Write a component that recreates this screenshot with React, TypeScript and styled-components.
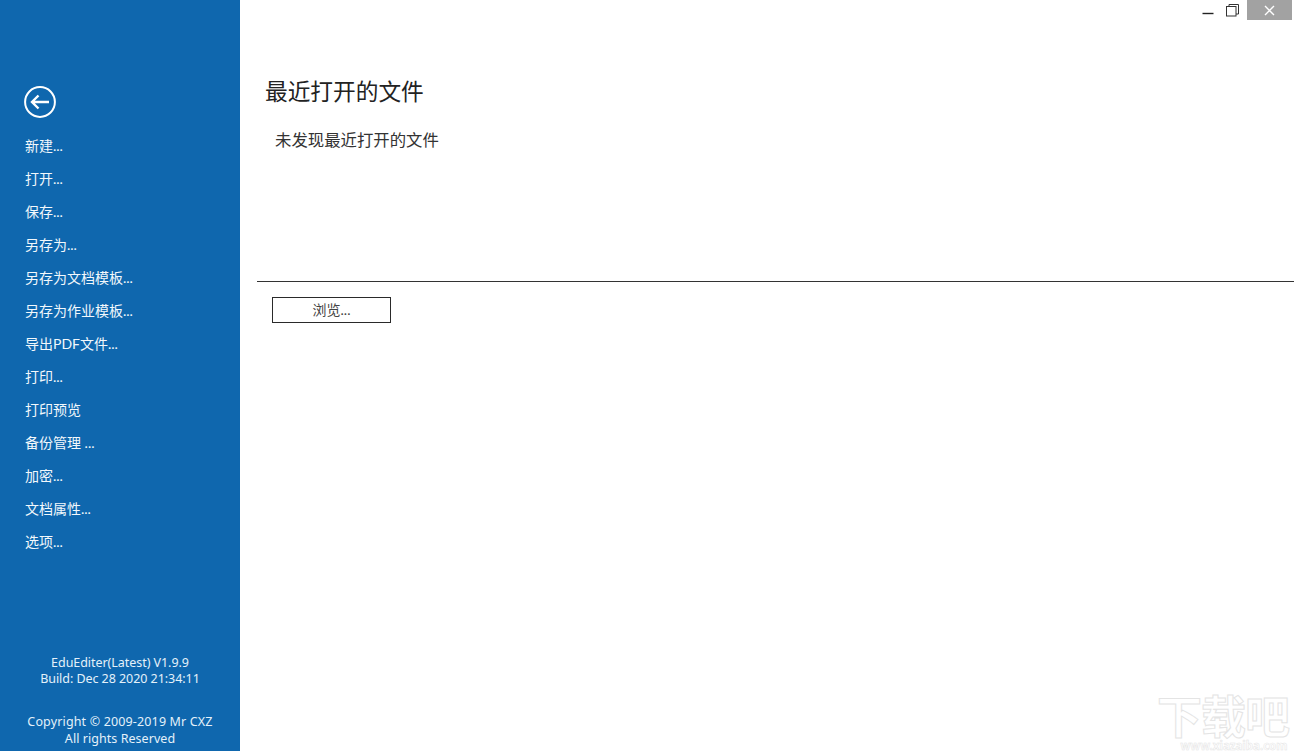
import React from "react";
import styled, { createGlobalStyle } from "styled-components";

const Global = createGlobalStyle`
  html, body { margin: 0; padding: 0; height: 100%; background: #fff; overflow: hidden; }
  #root { height: 100%; }
  * { box-sizing: border-box; }
`;

const FONT = `"Noto Sans", "Noto Sans CJK SC", sans-serif`;
const CJK = `Lato, "Noto Sans CJK SC", "Noto Sans", sans-serif`;

const Page = styled.div`
  position: relative;
  display: flex;
  width: 1294px;
  height: 751px;
  font-family: ${FONT};
  overflow: hidden;
  background: #fff;
`;

const Sidebar = styled.aside`
  width: 240px;
  flex: none;
  display: flex;
  flex-direction: column;
  background: #0f67ae;
  color: #eef6fc;
  padding-top: 86px;
`;

const BackButton = styled.button`
  width: 32px;
  height: 32px;
  margin-left: 24px;
  padding: 0;
  border: 0;
  background: none;
  display: block;
`;

const Menu = styled.nav`
  margin-top: 11px;
  display: flex;
  flex-direction: column;
`;

const MenuItem = styled.div`
  height: 33px;
  padding-left: 25px;
  font-family: ${CJK};
  font-size: 14px;
  line-height: 33px;
  color: #f2f8fc;
`;

const Footer = styled.footer`
  margin-top: auto;
  padding-bottom: 4px;
  text-align: center;
  font-size: 12.5px;
  line-height: 16.3px;
  color: #e4f1fa;
`;

const FooterBlock = styled.div`
  & + & { margin-top: 27px; }
`;

const FooterLine = styled.div<{ $spacing?: number }>`
  letter-spacing: ${(p) => p.$spacing ?? 0}px;
`;

const Main = styled.main`
  flex: 1;
  display: flex;
  flex-direction: column;
  padding-left: 17px;
  padding-top: 75px;
`;

const Title = styled.h1`
  margin: 0 0 0 8px;
  font-family: ${CJK};
  font-size: 22.7px;
  font-weight: 400;
  line-height: 34px;
  color: #222;
`;

const Empty = styled.p`
  margin: 20px 0 0 18px;
  height: 152px;
  font-family: ${CJK};
  font-size: 16.4px;
  line-height: 22px;
  color: #333;
`;

const Divider = styled.hr`
  margin: 0;
  border: 0;
  border-top: 1px solid #333;
  height: 1px;
`;

const Browse = styled.button`
  margin: 15px 0 0 15px;
  width: 119px;
  height: 26px;
  border: 1px solid #2a2a2a;
  background: #fff;
  font-family: ${CJK};
  font-size: 14px;
  line-height: 24px;
  padding: 0;
  color: #444;
  display: block;
`;

const WindowControls = styled.div`
  position: absolute;
  top: 0;
  right: 2px;
  display: flex;
  align-items: flex-start;
`;

const WinButton = styled.div<{ $w: number; $active?: boolean; $shift?: number }>`
  width: ${(p) => p.$w}px;
  height: 20px;
  padding-right: ${(p) => p.$shift ?? 0}px;
  display: flex;
  align-items: center;
  justify-content: center;
  background: ${(p) => (p.$active ? "#a2a2a2" : "transparent")};
`;

const Watermark = styled.div`
  position: absolute;
  right: 4px;
  top: 693px;
  width: 134px;
  text-align: center;
  color: transparent;
  -webkit-text-stroke: 1px #e4e4e4;
  pointer-events: none;
`;

const WatermarkTitle = styled.div`
  font-family: ${CJK};
  font-size: 45px;
  line-height: 48px;
  font-weight: 700;
  white-space: nowrap;
  letter-spacing: -1px;
`;

const WatermarkUrl = styled.div`
  margin-left: 22px;
  font-family: ${FONT};
  font-size: 11.5px;
  line-height: 10px;
  font-weight: 700;
  -webkit-text-stroke: 0.5px #e4e4e4;
  white-space: nowrap;
`;

const items = [
  "新建...", "打开...", "保存...", "另存为...", "另存为文档模板...", "另存为作业模板...",
  "导出PDF文件...", "打印...", "打印预览", "备份管理 ...", "加密...", "文档属性...", "选项...",
];

export default function App() {
  return (
    <Page>
      <Global />
      <Sidebar>
        <BackButton aria-label="返回">
          <svg width="32" height="32" viewBox="0 0 32 32" fill="none" stroke="#fff">
            <circle cx="16" cy="16" r="14.9" strokeWidth="2" />
            <path d="M7.5 16H25M14.5 9.5L8 16L14.5 22.5" strokeWidth="2.4" />
          </svg>
        </BackButton>
        <Menu>
          {items.map((t) => (
            <MenuItem key={t}>{t}</MenuItem>
          ))}
        </Menu>
        <Footer>
          <FooterBlock>
            <FooterLine $spacing={-0.05}>EduEditer(Latest) V1.9.9</FooterLine>
            <FooterLine $spacing={-0.05}>Build: Dec 28 2020 21:34:11</FooterLine>
          </FooterBlock>
          <FooterBlock>
            <FooterLine $spacing={0.15}>Copyright © 2009-2019 Mr CXZ</FooterLine>
            <FooterLine $spacing={0.05}>All rights Reserved</FooterLine>
          </FooterBlock>
        </Footer>
      </Sidebar>
      <Main>
        <Title>最近打开的文件</Title>
        <Empty>未发现最近打开的文件</Empty>
        <Divider />
        <Browse>浏览...</Browse>
      </Main>
      <WindowControls>
        <WinButton $w={24} $shift={6}>
          <svg width="12" height="12" viewBox="0 0 12 12"><path d="M0.5 9.5H11.5" stroke="#222" strokeWidth="1.4" /></svg>
        </WinButton>
        <WinButton $w={24} $shift={6}>
          <svg width="13" height="13" viewBox="0 0 13 13" fill="none" stroke="#333" strokeWidth="1">
            <rect x="0.5" y="2.5" width="9.5" height="9.5" />
            <path d="M3 2.5V0.5H12.5V10H10" />
          </svg>
        </WinButton>
        <WinButton $w={45} $active>
          <svg width="11" height="11" viewBox="0 0 11 11"><path d="M1 1L10 10M10 1L1 10" stroke="#fff" strokeWidth="1.4" /></svg>
        </WinButton>
      </WindowControls>
      <Watermark>
        <WatermarkTitle>下载吧</WatermarkTitle>
        <WatermarkUrl>www.xiazaiba.com</WatermarkUrl>
      </Watermark>
    </Page>
  );
}
